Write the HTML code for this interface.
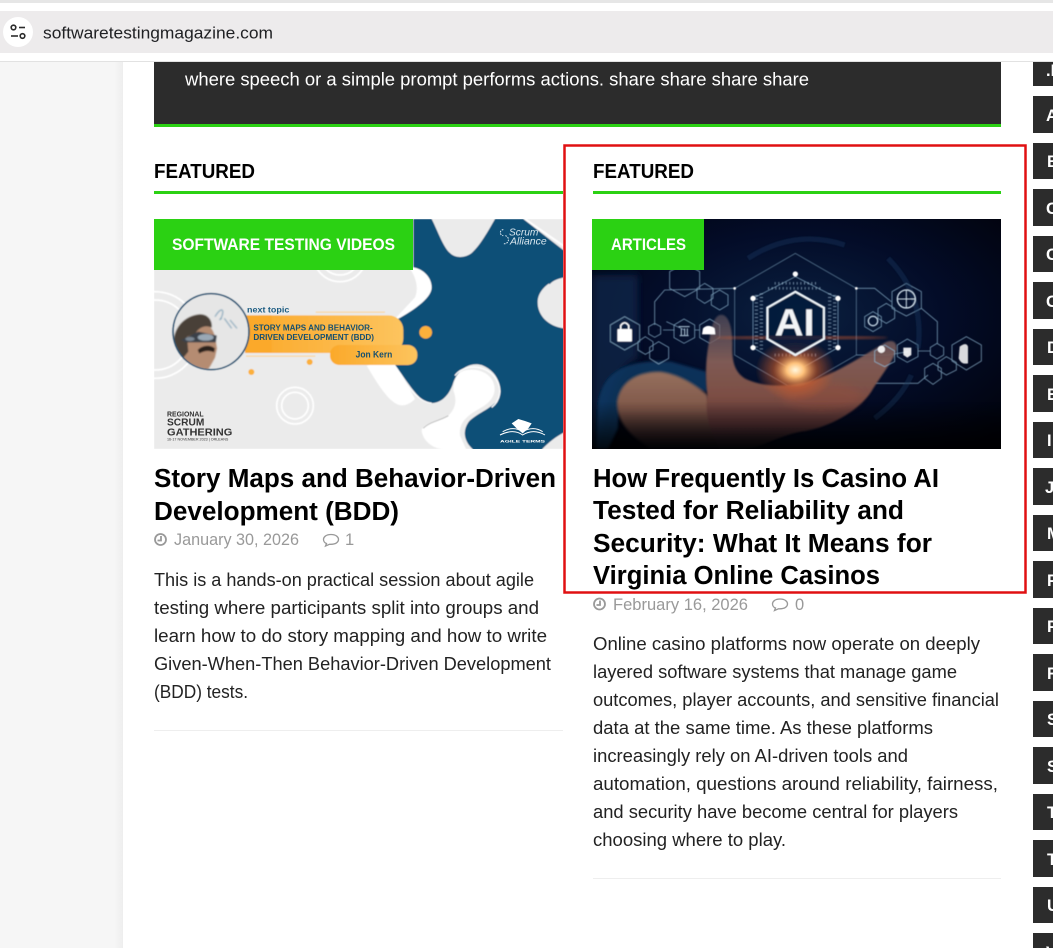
<!DOCTYPE html>
<html><head><meta charset="utf-8"><title>Software Testing Magazine</title>
<style>
html,body{margin:0;padding:0;background:#fff;overflow:hidden}
body{width:1053px;height:948px;position:relative}
svg.page{position:absolute;left:0;top:0}
text{font-family:"Liberation Sans",sans-serif}
.b{font-weight:700}
</style></head><body>
<svg class="page" width="1053" height="948" viewBox="0 0 1053 948" xmlns="http://www.w3.org/2000/svg">
<defs>
<linearGradient id="gut" x1="0" x2="1"><stop offset="0" stop-color="#f6f6f6"/><stop offset=".93" stop-color="#f6f6f6"/><stop offset="1" stop-color="#eeeeee"/></linearGradient>
<linearGradient id="org" x1="0" x2="1"><stop offset="0" stop-color="#fba92a"/><stop offset="1" stop-color="#fdc45e"/></linearGradient>
<radialGradient id="navy" cx=".5" cy=".42" r=".72"><stop offset="0" stop-color="#0a2040"/><stop offset=".5" stop-color="#030c28"/><stop offset="1" stop-color="#01020a"/></radialGradient>
<radialGradient id="glow"><stop offset="0" stop-color="#fff8e0"/><stop offset=".22" stop-color="#ffc27a"/><stop offset=".55" stop-color="#d8602a" stop-opacity=".55"/><stop offset="1" stop-color="#d8602a" stop-opacity="0"/></radialGradient>
<linearGradient id="hand" x1="0" x2="0" y1="0" y2="1"><stop offset="0" stop-color="#6f6068" stop-opacity=".55"/><stop offset=".35" stop-color="#7e5a54"/><stop offset=".6" stop-color="#7c4e44"/><stop offset=".82" stop-color="#5a3436"/><stop offset="1" stop-color="#12121e"/></linearGradient>
<linearGradient id="arm" x1="0" x2="0" y1="0" y2="1"><stop offset="0" stop-color="#96705e"/><stop offset=".5" stop-color="#7e5648"/><stop offset=".8" stop-color="#3e2a2c"/><stop offset="1" stop-color="#0e0e18"/></linearGradient>
<linearGradient id="fade" x1="0" x2="0" y1="0" y2="1"><stop offset="0" stop-color="#000" stop-opacity="0"/><stop offset="1" stop-color="#000" stop-opacity=".8"/></linearGradient>
<clipPath id="face"><circle cx="183" cy="350" r="112"/></clipPath>
<filter id="bl"><feGaussianBlur stdDeviation="4"/></filter>
<filter id="bl2"><feGaussianBlur stdDeviation="12"/></filter>
<filter id="bl3"><feGaussianBlur stdDeviation="1.300"/></filter>
<filter id="bl4"><feGaussianBlur stdDeviation="2.200"/></filter>
</defs>

<rect width="1053" height="948" fill="#fff"/>
<rect x="0" y="62" width="123" height="886" fill="url(#gut)"/>

<rect x="154" y="62" width="847" height="62" fill="#2c2c2c"/>
<rect x="154" y="124" width="847" height="3" fill="#2bd113"/>
<text x="185" y="85.500" font-size="18.300" fill="#fff" textLength="624" lengthAdjust="spacingAndGlyphs">where speech or a simple prompt performs actions. share share share share</text>

<!-- browser bar -->
<rect width="1053" height="3" fill="#e6e6e6"/>
<rect y="3" width="1053" height="58" fill="#fff"/>
<rect y="61" width="1053" height="1" fill="#e2e2e2"/>
<rect x="0" y="11" width="1053" height="42" fill="#edebec"/>
<circle cx="18" cy="32" r="15" fill="#fff"/>
<g fill="none" stroke="#2b2b2b" stroke-width="1.600">
<circle cx="13.500" cy="27.500" r="2.300"/><path d="M19 27.500H25"/>
<circle cx="22.500" cy="36" r="2.300"/><path d="M11 36H18"/>
</g>
<text x="43" y="38.500" font-size="17" fill="#202124" textLength="230" lengthAdjust="spacingAndGlyphs">softwaretestingmagazine.com</text>

<!-- headings -->
<text class="b" x="154" y="178" font-size="20" fill="#000" textLength="101" lengthAdjust="spacingAndGlyphs">FEATURED</text>
<rect x="154" y="191" width="409" height="3" fill="#2bd113"/>
<text class="b" x="593" y="178" font-size="20" fill="#000" textLength="101" lengthAdjust="spacingAndGlyphs">FEATURED</text>
<rect x="593" y="191" width="408" height="3" fill="#2bd113"/>

<!-- left image -->
<svg x="154" y="219" width="409" height="230" viewBox="12 12 1227 690" preserveAspectRatio="none">
<g filter="url(#bl3)">
<rect x="12" y="12" width="1227" height="690" fill="#ebebeb"/>
<g fill="none" stroke="#fff" stroke-width="5">
<circle cx="15" cy="360" r="130"/><circle cx="15" cy="360" r="105"/>
<circle cx="435" cy="572" r="55"/><circle cx="435" cy="572" r="40"/>
<circle cx="570" cy="120" r="80"/><circle cx="570" cy="120" r="60"/>
</g>
<g transform="translate(630 12)">
<path d="M20 440C50 490 80 540 110 555C130 565 150 555 165 540L100 420Z" fill="#fff"/>
<path d="M150 140C195 145 220 175 218 210C212 245 165 275 100 305L165 235C178 205 165 170 150 150Z" fill="#fff"/>
<path d="M490 0H612V85Z" fill="#fff"/>
<path d="M500 0H612V78Z" fill="#ebebeb"/>
<path d="M160 0H215C235 40 250 85 270 102C285 118 315 118 335 102C360 80 385 35 405 0H490L612 95V175C565 185 533 215 533 250C533 290 565 322 612 328V640C590 652 565 670 545 692H340C315 670 305 640 325 610C345 585 395 570 415 540C430 500 410 455 365 438C330 428 295 450 280 490C270 525 245 555 210 552C175 545 150 500 100 430L105 305C150 280 215 240 215 205C215 175 190 150 160 145Z" fill="#0a4f77"/>
<path d="M292 468C310 445 370 445 395 480C415 515 400 545 365 565C330 585 295 605 300 650L318 690H250C215 690 185 660 185 632C195 610 240 605 265 590C290 565 290 540 280 515C280 495 285 480 292 468Z" fill="#fff"/>
<path d="M285 470C310 435 375 435 405 475C430 510 420 545 395 565" fill="none" stroke="#fff" stroke-width="4"/>
<path d="M190 628C205 610 240 605 265 590" fill="none" stroke="#bdbdbd" stroke-width="3"/>
<path d="M110 450C140 500 175 550 215 552" fill="none" stroke="#fff" stroke-width="3"/>
<path d="M612 172C590 178 575 185 568 195" fill="none" stroke="#0a4f77" stroke-width="3"/>
</g>
<rect x="285" y="301" width="475" height="113" rx="44" fill="url(#org)"/>
<rect x="540" y="390" width="262" height="60" rx="28" fill="url(#org)"/>
<circle cx="827" cy="352" r="19" fill="#fbb03b"/>
<circle cx="479" cy="441" r="9" fill="#fbb03b"/>
<circle cx="304" cy="471" r="9" fill="#fbb03b"/>
<rect x="497" y="290" width="208" height="3" fill="#fcd08a"/>
<rect x="288" y="422" width="208" height="3" fill="#fcd08a"/>
<rect x="285" y="301" width="80" height="113" fill="#fba92a"/>
<circle cx="183" cy="350" r="114" fill="#e6e6e6" stroke="#164f72" stroke-width="5"/>
<g clip-path="url(#face)"><g transform="translate(45 210)" filter="url(#bl3)">
<path d="M45 175C45 130 100 105 135 125C152 145 152 170 156 190L150 218L135 245L122 262H70L58 225Z" fill="#b58c72"/>
<path d="M26 185C22 130 58 92 105 88C128 88 142 105 140 128C122 118 100 128 92 145L66 155L70 200L52 222C38 212 28 200 26 185Z" fill="#4a4038"/>
<path d="M48 165L100 140L155 152L152 172L110 172L62 172Z" fill="#3a4048"/>
<ellipse cx="122" cy="157" rx="24" ry="10" fill="#9aa8b6"/>
<ellipse cx="75" cy="162" rx="14" ry="6" fill="#7d8894"/>
<path d="M98 195C112 180 135 178 150 190L147 202C132 195 115 198 103 206Z" fill="#2c211c"/>
<path d="M150 95C165 70 178 68 172 90C168 105 158 108 170 100M178 100L200 130M195 105L216 130" fill="none" stroke="#6a93ad" stroke-width="2.500"/>
</g></g>
</g>
<g style="font-weight:700">
<text x="291" y="293" font-size="25" textLength="127" fill="#1c5c82" lengthAdjust="spacingAndGlyphs">next topic</text>
<text x="310" y="346" font-size="24" textLength="358" fill="#17506f" lengthAdjust="spacingAndGlyphs">STORY MAPS AND BEHAVIOR-</text>
<text x="310" y="375" font-size="24" textLength="362" fill="#17506f" lengthAdjust="spacingAndGlyphs">DRIVEN DEVELOPMENT (BDD)</text>
<text x="617" y="428" font-size="27" textLength="110" fill="#17506f" lengthAdjust="spacingAndGlyphs">Jon Kern</text>
</g>
<g fill="#333">
<text x="51" y="605" font-size="22" textLength="110" style="font-weight:700" lengthAdjust="spacingAndGlyphs">REGIONAL</text>
<text x="51" y="632" font-size="29" textLength="112" style="font-weight:700" lengthAdjust="spacingAndGlyphs">SCRUM</text>
<text x="51" y="661" font-size="29" textLength="196" style="font-weight:700" lengthAdjust="spacingAndGlyphs">GATHERING</text>
<text x="51" y="677" font-size="12" textLength="184" lengthAdjust="spacingAndGlyphs">16-17 NOVEMBER 2023 | ORLEANS</text>
</g>
<g fill="#d8e6ee">
<text x="1077" y="62" font-size="29" font-style="italic" textLength="88" lengthAdjust="spacingAndGlyphs">Scrum</text>
<text x="1080" y="89" font-size="29" font-style="italic" textLength="110" lengthAdjust="spacingAndGlyphs">Alliance</text>
</g>
<path d="M1060 44A9 9 0 1 0 1060 62M1066 62A9 9 0 1 1 1060 86" fill="none" stroke="#d8e6ee" stroke-width="3" stroke-dasharray="5 3"/>
<path d="M1085 625L1105 612L1125 618L1145 625L1135 640L1118 655L1100 640Z" fill="#fff"/>
<path d="M1050 660Q1090 640 1118 660Q1150 640 1185 660M1058 650Q1090 632 1118 650M1118 650Q1150 632 1178 650" fill="none" stroke="#fff" stroke-width="3"/>
<text x="1050" y="682" font-size="12" fill="#fff" style="font-weight:700" textLength="135" lengthAdjust="spacingAndGlyphs">AGILE TERMS</text>
</svg>

<!-- right image -->
<svg x="592" y="219" width="409" height="230" viewBox="12 12 1227 690" preserveAspectRatio="none">
<rect x="12" y="12" width="1227" height="690" fill="url(#navy)"/>
<g filter="url(#bl3)">
<path d="M12 180H150L150 430C90 460 60 540 30 702H12Z" fill="#0a2a50" opacity=".7" filter="url(#bl2)"/>
<path d="M30 570C40 480 100 430 250 440L355 470L360 530L180 500C120 500 90 560 90 640L60 702H25Z" fill="#0b3a66" opacity=".8" filter="url(#bl)"/>
<g fill="none" stroke="#8fb6cf" stroke-width="2.500" opacity=".8">
<path d="M622 115L805 220V420L622 525L440 420V220Z" opacity=".7"/>
<path d="M622 185L750 250V398L622 470L495 398V250Z"/>
<path d="M235 320L290 345M440 220L230 225L200 260V330M805 220H860L910 260M805 420H900L960 410M1000 280L1048 320V385M770 505H990L1020 480M225 345H260M320 345H335M990 408H1027"/>
<path d="M290 145L335 170V220L290 245L245 220V170Z"/>
<path d="M350 205L375 220V250L350 265L327 250V220Z"/>
<path d="M395 225L420 240V270L395 285L370 270V240Z"/>
<path d="M110 305L155 330V380L110 405L67 380V330Z"/>
<path d="M200 325L218 335V357L200 367L182 357V335Z"/>
<path d="M288 312L320 330V368L288 385L258 368V330Z"/>
<path d="M365 312L395 330V368L365 385L335 368V330Z"/>
<path d="M172 365L195 380V405L172 418L150 405V380Z"/>
<path d="M212 380L242 397V430L212 447L185 430V397Z"/>
<path d="M955 205L1000 230V280L955 303L912 280V230Z"/>
<path d="M895 265L920 280V310L895 325L870 310V280Z"/>
<path d="M855 290L880 305V335L855 350L830 335V305Z"/>
<path d="M958 372L990 390V425L958 442L928 425V390Z"/>
<path d="M1047 385L1067 397V420L1047 432L1027 420V397Z"/>
<path d="M1135 365L1180 390V438L1135 465L1092 438V390Z"/>
<path d="M1075 425L1105 442V465L1075 480L1050 465V442Z"/>
<path d="M1035 445L1060 460V490L1035 508L1010 490V460Z"/>
</g>
<g fill="none" stroke="#153a5e" stroke-width="16" opacity=".4">
<path d="M480 130Q620 40 770 90"/>
<path d="M900 130Q1010 240 990 400"/>
<path d="M860 610Q940 550 970 480"/>
</g>
<path d="M87 560C95 505 140 470 215 470C265 475 320 505 358 540L400 702H190C140 670 85 630 87 560Z" fill="url(#arm)" filter="url(#bl)"/>
<path d="M358 540C350 470 355 420 365 370C372 320 385 295 405 300C425 305 435 350 433 395C432 440 440 470 470 490C520 515 590 520 680 495C750 470 820 425 880 390C905 370 930 375 925 405C915 440 880 480 850 530C810 590 720 640 640 650C560 665 520 702 460 702H395C365 650 350 600 358 540Z" fill="url(#hand)" filter="url(#bl4)"/>
<ellipse cx="700" cy="545" rx="120" ry="45" fill="#94503c" opacity=".4" filter="url(#bl2)"/>
<g fill="none" stroke="#8fb6cf" stroke-width="2.500" opacity=".8"><path d="M890 390L920 408V440L890 455L860 440V408Z"/></g>
<g fill="none" stroke="#b8d5e8" opacity=".6" stroke-dasharray="3 8">
<path d="M505 240V405M520 235V410M725 235V410M740 240V405" stroke-width="10"/>
<path d="M560 205H690M540 220H705M560 420H690" stroke-width="8"/>
</g>
<ellipse cx="622" cy="465" rx="120" ry="95" fill="url(#glow)"/>
<ellipse cx="640" cy="368" rx="260" ry="5" fill="#e8622e" opacity=".5" filter="url(#bl)"/>
<path d="M622 230L708 278V372L622 420L538 372V278Z" fill="#081a3c" fill-opacity=".7" stroke="#eef4f8" stroke-width="7"/>
<text x="560" y="362" font-size="114" fill="#f2f4f6" style="font-weight:700" textLength="120" lengthAdjust="spacingAndGlyphs">AI</text>
<g fill="#fff">
<circle cx="622" cy="177" r="8"/><circle cx="495" cy="250" r="8"/><circle cx="750" cy="250" r="8"/><circle cx="495" cy="398" r="8"/><circle cx="750" cy="398" r="8"/><circle cx="440" cy="220" r="4"/><circle cx="805" cy="220" r="4"/>
<rect x="88" y="342" width="44" height="38" rx="3"/>
<path d="M345 340Q360 325 380 340L382 358H342Z"/>
<path d="M1115 395Q1135 380 1140 395V445Q1120 450 1112 430Z" opacity=".85"/>
<circle cx="880" cy="403" r="11" opacity=".9"/>
<path d="M946 398H970V420L958 428L946 420Z" opacity=".9"/>
</g>
<path d="M98 342V332Q110 315 122 332V342" fill="none" stroke="#fff" stroke-width="5"/>
<circle cx="955" cy="252" r="27" fill="none" stroke="#d5e4ef" stroke-width="4"/>
<path d="M928 252H982M955 225V279" stroke="#d5e4ef" stroke-width="3"/>
<circle cx="855" cy="318" r="14" fill="none" stroke="#c6d8e6" stroke-width="4"/>
<path d="M272 335H305M275 362H302M280 340V360M290 340V360M298 340V360" stroke="#b9d1e2" stroke-width="3"/>
</g>
<rect x="12" y="560" width="1227" height="142" fill="url(#fade)"/>
</svg>

<!-- badges -->
<rect x="154" y="219" width="259" height="51" fill="#2bd113"/>
<text class="b" x="172" y="250" font-size="16.500" fill="#fff" textLength="223" lengthAdjust="spacingAndGlyphs">SOFTWARE TESTING VIDEOS</text>
<rect x="592" y="219" width="112" height="51" fill="#2bd113"/>
<text class="b" x="611" y="250" font-size="16.500" fill="#fff" textLength="75" lengthAdjust="spacingAndGlyphs">ARTICLES</text>

<!-- titles -->
<g class="b" font-size="25.500" fill="#000">
<text x="154" y="487" textLength="402" lengthAdjust="spacingAndGlyphs">Story Maps and Behavior-Driven</text>
<text x="154" y="520" textLength="245" lengthAdjust="spacingAndGlyphs">Development (BDD)</text>
<text x="593" y="487" textLength="346" lengthAdjust="spacingAndGlyphs">How Frequently Is Casino AI</text>
<text x="593" y="519" textLength="311" lengthAdjust="spacingAndGlyphs">Tested for Reliability and</text>
<text x="593" y="552" textLength="339" lengthAdjust="spacingAndGlyphs">Security: What It Means for</text>
<text x="593" y="584" textLength="287" lengthAdjust="spacingAndGlyphs">Virginia Online Casinos</text>
</g>

<!-- meta -->
<g font-size="16.500" fill="#999">
<text x="174" y="545" textLength="125" lengthAdjust="spacingAndGlyphs">January 30, 2026</text>
<text x="345" y="545" textLength="8">1</text>
<text x="613" y="610" textLength="135" lengthAdjust="spacingAndGlyphs">February 16, 2026</text>
<text x="795" y="610" textLength="8">0</text>
</g>
<g fill="none" stroke="#999">
<g stroke-width="1.800">
<circle cx="160.500" cy="539.500" r="5.500"/><path d="M161 536V540.500H157.500"/>
<circle cx="599.500" cy="604" r="5.500"/><path d="M600 600.500V605H596.500"/>
</g>
<g stroke-width="1.300">
<path d="M331 534.500C326 534.500 323.500 537 323.500 539.500C323.500 541.500 325 543 326.500 543.500L325.500 546L329.500 544.300H331C336 544.300 338.500 542 338.500 539.500C338.500 537 336 534.500 331 534.500Z"/>
<path d="M780 599C775 599 772.500 601.500 772.500 604C772.500 606 774 607.500 775.500 608L774.500 610.500L778.500 608.800H780C785 608.800 787.500 606.500 787.500 604C787.500 601.500 785 599 780 599Z"/>
</g>
</g>

<!-- body -->
<g font-size="18.300" fill="#222">
<text x="154" y="586" textLength="380" lengthAdjust="spacingAndGlyphs">This is a hands-on practical session about agile</text>
<text x="154" y="614" textLength="385" lengthAdjust="spacingAndGlyphs">testing where participants split into groups and</text>
<text x="154" y="642" textLength="393" lengthAdjust="spacingAndGlyphs">learn how to do story mapping and how to write</text>
<text x="154" y="670" textLength="397" lengthAdjust="spacingAndGlyphs">Given-When-Then Behavior-Driven Development</text>
<text x="154" y="698" textLength="94" lengthAdjust="spacingAndGlyphs">(BDD) tests.</text>
<text x="593" y="650" textLength="387" lengthAdjust="spacingAndGlyphs">Online casino platforms now operate on deeply</text>
<text x="593" y="678" textLength="364" lengthAdjust="spacingAndGlyphs">layered software systems that manage game</text>
<text x="593" y="706" textLength="406" lengthAdjust="spacingAndGlyphs">outcomes, player accounts, and sensitive financial</text>
<text x="593" y="734" textLength="340" lengthAdjust="spacingAndGlyphs">data at the same time. As these platforms</text>
<text x="593" y="762" textLength="315" lengthAdjust="spacingAndGlyphs">increasingly rely on AI-driven tools and</text>
<text x="593" y="790" textLength="405" lengthAdjust="spacingAndGlyphs">automation, questions around reliability, fairness,</text>
<text x="593" y="818" textLength="365" lengthAdjust="spacingAndGlyphs">and security have become central for players</text>
<text x="593" y="846" textLength="193" lengthAdjust="spacingAndGlyphs">choosing where to play.</text>
</g>
<rect x="154" y="730" width="409" height="1" fill="#eee"/>
<rect x="593" y="878" width="408" height="1" fill="#eee"/>

<!-- red highlight -->
<rect x="564.500" y="145.500" width="461" height="447" fill="none" stroke="#e01012" stroke-width="2.500"/>

<!-- sidebar -->
<g fill="#2c2c2c">
<rect x="1033" y="62" width="20" height="24"/><rect x="1033" y="96" width="20" height="37"/><rect x="1033" y="143" width="20" height="36"/><rect x="1033" y="189" width="20" height="37"/><rect x="1033" y="236" width="20" height="36"/><rect x="1033" y="282" width="20" height="37"/><rect x="1033" y="329" width="20" height="36"/><rect x="1033" y="375" width="20" height="37"/><rect x="1033" y="422" width="20" height="36"/><rect x="1033" y="468" width="20" height="37"/><rect x="1033" y="515" width="20" height="36"/><rect x="1033" y="561" width="20" height="37"/><rect x="1033" y="608" width="20" height="36"/><rect x="1033" y="654" width="20" height="37"/><rect x="1033" y="701" width="20" height="36"/><rect x="1033" y="747" width="20" height="37"/><rect x="1033" y="794" width="20" height="36"/><rect x="1033" y="840" width="20" height="37"/><rect x="1033" y="887" width="20" height="36"/><rect x="1033" y="933" width="20" height="15"/>
</g>
<g class="b" font-size="16.500" fill="#fff">
<text x="1046" y="76">.N</text><text x="1046" y="121">A</text><text x="1047" y="167">B</text><text x="1046" y="214">C</text><text x="1046" y="260">C</text><text x="1046" y="307">C</text><text x="1047" y="353">D</text><text x="1047" y="400">E</text><text x="1047" y="446">I</text><text x="1045" y="493">JU</text><text x="1047" y="539">M</text><text x="1047" y="586">P</text><text x="1047" y="632">P</text><text x="1047" y="679">R</text><text x="1047" y="725">S</text><text x="1047" y="772">S</text><text x="1047" y="818">T</text><text x="1047" y="865">T</text><text x="1047" y="911">U</text><text x="1046" y="958">V</text>
</g>
</svg>
</body></html>
